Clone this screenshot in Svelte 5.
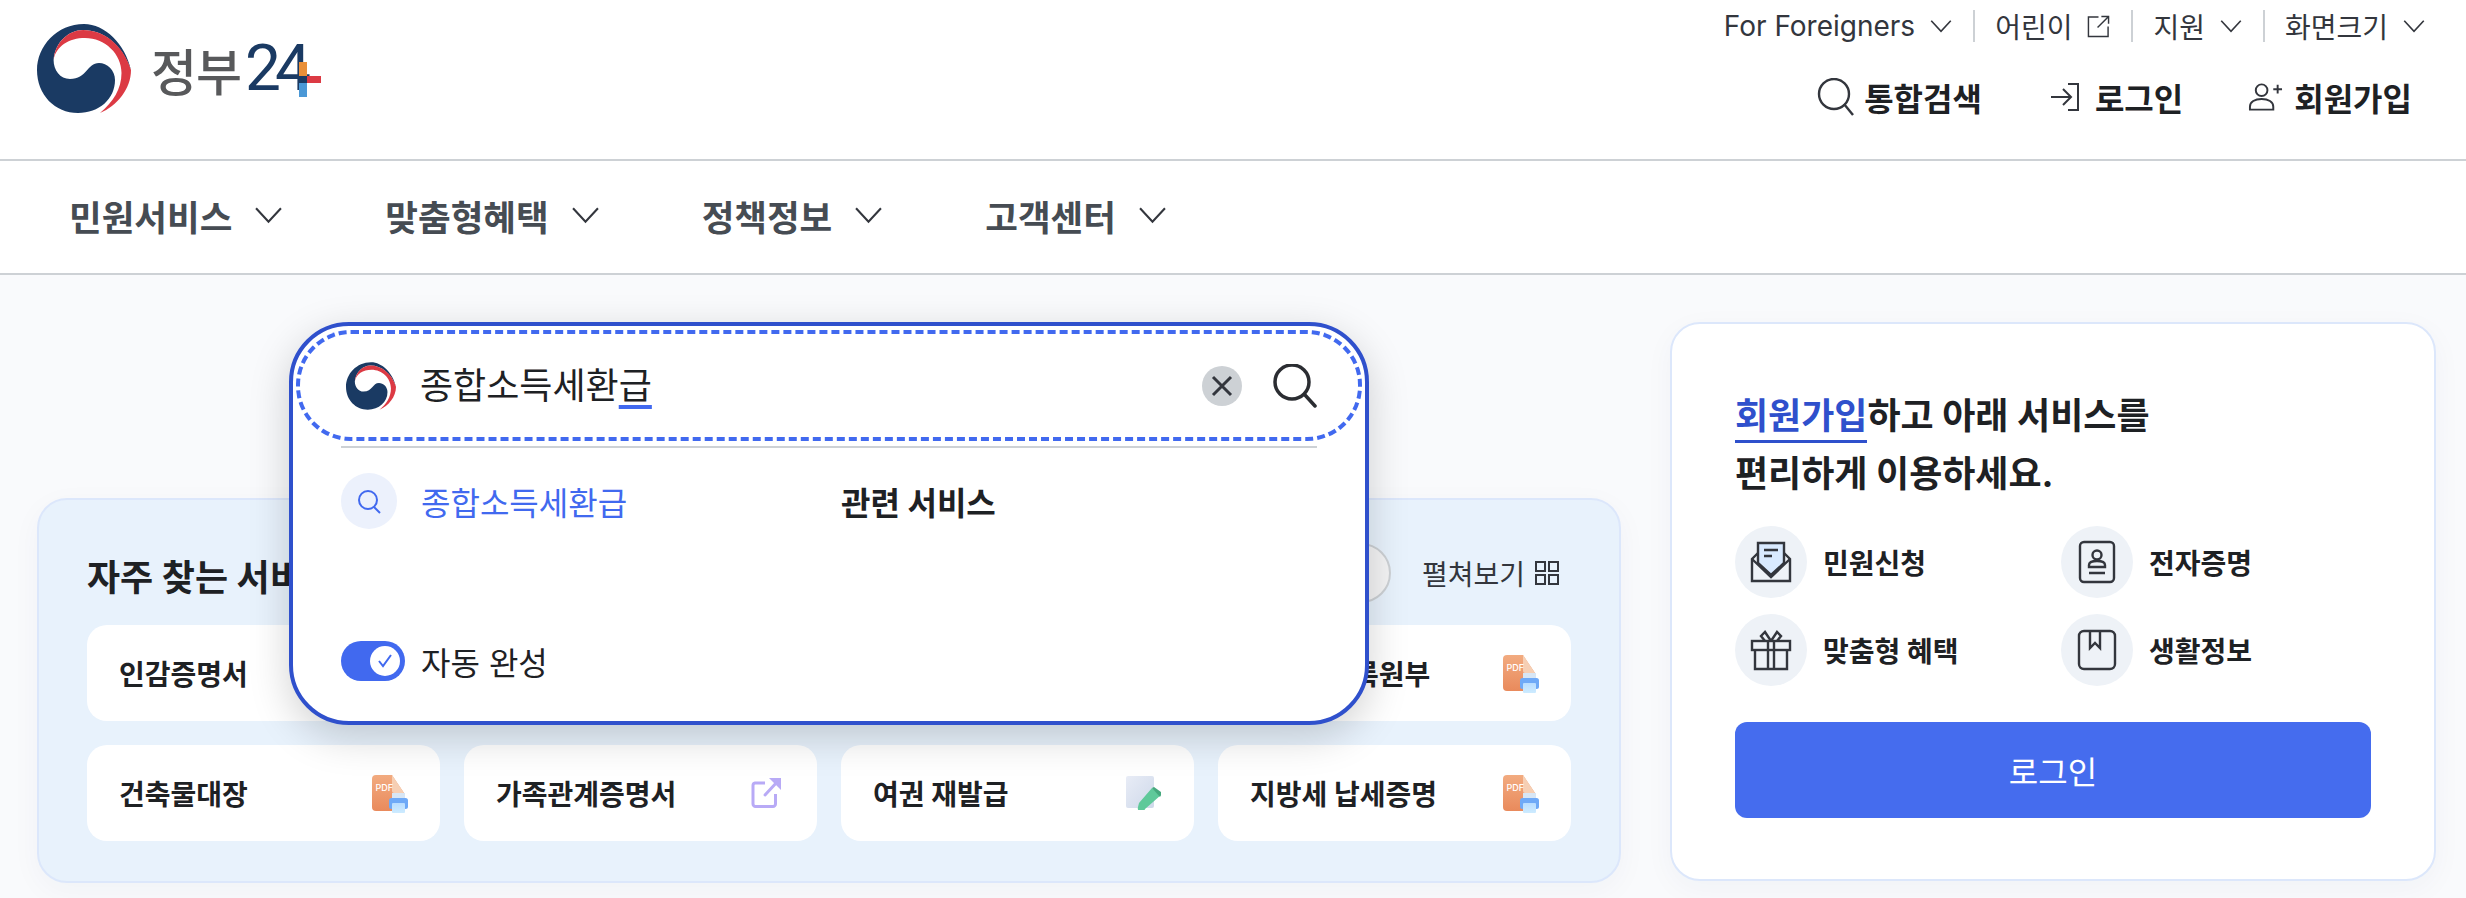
<script>
  const utilLinks = [
    { label: "For Foreigners", icon: "chevron" },
    { label: "어린이", icon: "external" },
    { label: "지원", icon: "chevron" },
    { label: "화면크기", icon: "chevron" }
  ];
  const menus = ["민원서비스", "맞춤형혜택", "정책정보", "고객센터"];
  const services = [
    { name: "인감증명서", icon: "pdf" },
    { name: "주민등록등본", icon: "pdf" },
    { name: "토지대장", icon: "pdf" },
    { name: "자동차등록원부", icon: "pdf" },
    { name: "건축물대장", icon: "pdf" },
    { name: "가족관계증명서", icon: "link" },
    { name: "여권 재발급", icon: "pen" },
    { name: "지방세 납세증명", icon: "pdf" }
  ];
</script>

{#snippet taegeuk(cls)}
  <svg class={cls} viewBox="0 0 94 89" aria-hidden="true">
    <path fill="#1a3a63" d="M47 0C20 0 0 22 0 46c0 25 18 43 41 43 21 0 37-14 37-33 0-10-8-17-16-17-12 0-12 16-29 16-10 0-16.400-9-16.400-19C18 18 32 6 46 6c20 0 39 14 48 40C88 20 68 0 47 0Z" />
    <path fill="#dc3a44" d="M16.600 36C18 18 32 6 46 6c20 0 40 14 48 40 0 19-14 36-31 43 13-11 21.500-24 21.500-40C84.500 30 68 14 48 14 32 14 19 22 16.600 36Z" />
  </svg>
{/snippet}

{#snippet chevron(cls)}
  <svg class={cls} viewBox="0 0 26 16" fill="none" stroke="currentColor" stroke-width="2" aria-hidden="true"><path d="M1 1l12 13L25 1" /></svg>
{/snippet}

{#snippet pdfIcon()}
  <svg class="card-icon pdf" width="36" height="38" viewBox="0 0 36 38" aria-hidden="true">
    <defs>
      <linearGradient id="pdf-page" x1="0" y1="0" x2="0" y2="1"><stop offset="0" stop-color="#f2ab80" /><stop offset="1" stop-color="#e98a5c" /></linearGradient>
      <linearGradient id="pdf-paper" x1="0" y1="0" x2="0" y2="1"><stop offset="0" stop-color="#b8dcff" /><stop offset="1" stop-color="#cdebff" /></linearGradient>
    </defs>
    <path fill="url(#pdf-page)" d="M4 0h16l12 18v18H4a4 4 0 0 1-4-4V4a4 4 0 0 1 4-4Z" />
    <path fill="#f6cfb4" d="M20 0l12 18H22a2 2 0 0 1-2-2Z" />
    <text x="3.500" y="16" class="pdf-text">PDF</text>
    <rect x="20" y="18" width="13" height="8" fill="#d7e6f5" />
    <rect x="17" y="23" width="19" height="11" rx="2.500" fill="#6ea9f7" />
    <rect x="20" y="28" width="13" height="10" rx="1" fill="url(#pdf-paper)" />
  </svg>
{/snippet}

{#snippet linkIcon()}
  <svg class="card-icon link" width="30" height="30" viewBox="0 0 30 30" fill="none" stroke="#b8aaf6" stroke-width="3" aria-hidden="true">
    <path d="M14 5H4a2.500 2.500 0 0 0-2 2.500V26a2.500 2.500 0 0 0 2.500 2.500H22a2.500 2.500 0 0 0 2.500-2.500V16" />
    <path stroke-linecap="round" d="M14 17L27 3" />
    <path fill="#b8aaf6" stroke="none" d="M18 0h12v12z" />
  </svg>
{/snippet}

{#snippet penIcon()}
  <svg class="card-icon pen" width="36" height="34" viewBox="0 0 36 34" aria-hidden="true">
    <defs>
      <linearGradient id="pen-page" x1="0" y1="0" x2="1" y2="1"><stop offset="0" stop-color="#e8ecf6" /><stop offset="1" stop-color="#cfd9ea" /></linearGradient>
    </defs>
    <rect width="28" height="32" rx="2" fill="url(#pen-page)" />
    <path fill="#5fc99a" d="M26 12l9 7-16 14a3 3 0 0 1-7-2l1-4Z" />
    <path fill="#45a87d" d="M26 12l2-1 7 5v3l-1 2Z" />
  </svg>
{/snippet}

<div class="page">
  <header class="top">
    <a class="logo" href="#home" aria-label="정부24">
      {@render taegeuk("logo-mark")}
      <span class="logo-name">정부</span>
      <span class="logo-num">24</span>
      <svg class="logo-plus" width="22" height="35" viewBox="0 0 22 35" aria-hidden="true">
        <rect width="8" height="14" fill="#e98f38" />
        <rect y="14" width="8" height="7" fill="#1a3a63" />
        <rect y="21" width="8" height="14" fill="#4b98d6" />
        <rect x="8" y="14" width="14" height="7" fill="#dc3a44" />
      </svg>
    </a>

    <div class="top-right">
      <ul class="util">
        {#each utilLinks as link}
          <li>
            <span>{link.label}</span>
            {#if link.icon === "chevron"}
              {@render chevron("util-chevron")}
            {:else}
              <svg class="util-ext" viewBox="0 0 24 24" fill="none" stroke="currentColor" stroke-width="1.500" aria-hidden="true"><path d="M12 2H1.500v20.500H22V12M11 13L22 2M15 1.500h7.500V9" /></svg>
            {/if}
          </li>
        {/each}
      </ul>
      <div class="account">
        <a class="acc-search" href="#search">
          <svg width="38" height="38" viewBox="0 0 38 38" fill="none" stroke="#33363d" stroke-width="2.400" aria-hidden="true"><ellipse cx="17" cy="16" rx="15" ry="15" /><path d="M27 26l9 11" /></svg>
          통합검색
        </a>
        <a class="acc-login" href="#login">
          <svg width="30" height="30" viewBox="0 0 30 30" fill="none" stroke="#33363d" stroke-width="2" aria-hidden="true"><path d="M18 2h10v26H18M1 15h19M13 7l8 8-8 8" /></svg>
          로그인
        </a>
        <a class="acc-join" href="#join">
          <svg width="35" height="30" viewBox="0 0 36 30" fill="none" stroke="#33363d" stroke-width="2" aria-hidden="true"><circle cx="14" cy="8" r="6" /><path d="M2 28v-3c0-5 5-8 12-8s12 3 12 8v3ZM26 7h9M30.500 2.500v9" /></svg>
          회원가입
        </a>
      </div>
    </div>
  </header>

  <nav class="gnb">
    {#each menus as menu}
      <a href="#menu">{menu} {@render chevron("gnb-chevron")}</a>
    {/each}
  </nav>

  <main class="content">
    <section class="favorites">
      <div class="fav-head">
        <h2>자주 찾는 서비스</h2>
        <div class="fav-tools">
          <span class="round-btn"></span>
          <span class="expand">
            펼쳐보기
            <svg width="24" height="24" viewBox="0 0 24 24" fill="none" stroke="#33363d" stroke-width="2" aria-hidden="true"><rect x="1" y="1" width="9" height="9" /><rect x="14" y="1" width="9" height="9" /><rect x="1" y="14" width="9" height="9" /><rect x="14" y="14" width="9" height="9" /></svg>
          </span>
        </div>
      </div>
      <div class="fav-grid">
        {#each services as item}
          <a class="fav-card" href="#service">
            <span>{item.name}</span>
            {#if item.icon === "pdf"}
              {@render pdfIcon()}
            {:else if item.icon === "link"}
              {@render linkIcon()}
            {:else}
              {@render penIcon()}
            {/if}
          </a>
        {/each}
      </div>
    </section>

    <aside class="join">
      <p class="join-title"><strong>회원가입</strong>하고 아래 서비스를<br />편리하게 이용하세요.</p>
      <ul class="join-list">
        <li>
          <span class="bubble">
            <svg width="42" height="42" viewBox="0 0 42 42" fill="none" stroke="#33363d" stroke-width="2.400" aria-hidden="true">
              <path fill="#d9eaff" d="M8 22V2h26v20l-13 12Z" />
              <path d="M14 9h14M14 15h8" />
              <path d="M8 12l-6 6v22h38V18l-6-6" />
              <path d="M2 18l19 18 19-18" />
            </svg>
          </span>
          민원신청
        </li>
        <li>
          <span class="bubble">
            <svg width="38" height="44" viewBox="0 0 38 44" fill="none" stroke="#33363d" stroke-width="2.400" aria-hidden="true">
              <rect x="2" y="2" width="34" height="40" rx="4" />
              <circle cx="19" cy="15" r="4.500" />
              <path d="M11 27v-2c0-3 4-4 8-4s8 1 8 4v2ZM11 33h16" />
            </svg>
          </span>
          전자증명
        </li>
        <li>
          <span class="bubble">
            <svg width="42" height="42" viewBox="0 0 42 42" fill="none" stroke="#33363d" stroke-width="2.400" aria-hidden="true">
              <rect x="2" y="12" width="38" height="9" />
              <path d="M5 21v19h32V21M18 12v28M24 12v28" />
              <path d="M21 12l-6-9-4 4 4 5M21 12l6-9 4 4-4 5" />
            </svg>
          </span>
          맞춤형 혜택
        </li>
        <li>
          <span class="bubble">
            <svg width="40" height="42" viewBox="0 0 40 42" fill="none" stroke="#33363d" stroke-width="2.400" aria-hidden="true">
              <rect x="2" y="2" width="36" height="38" rx="5" />
              <path d="M13 2v17l5-5 5 5V2" />
            </svg>
          </span>
          생활정보
        </li>
      </ul>
      <button class="login-btn" type="button">로그인</button>
    </aside>
  </main>

  <div class="search-pop">
    <div class="search-box">
      {@render taegeuk("search-mark")}
      <div class="search-value">종합소득세환<span class="composing">급</span></div>
      <span class="clear">
        <svg width="22" height="22" viewBox="0 0 22 22" fill="none" stroke="#33363d" stroke-width="3" aria-hidden="true"><path d="M2 2l18 18M20 2L2 20" /></svg>
      </span>
      <svg class="go" width="44" height="44" viewBox="0 0 44 44" fill="none" stroke="#2b2d32" stroke-width="3.500" aria-hidden="true"><circle cx="19" cy="18" r="17" /><path stroke-linecap="round" d="M32 31l10 11" /></svg>
    </div>
    <div class="search-rule"></div>
    <div class="suggest">
      <div class="suggest-row">
        <span class="suggest-dot">
          <svg width="24" height="25" viewBox="0 0 24 25" fill="none" stroke="#4169ef" stroke-width="2" aria-hidden="true"><circle cx="11" cy="11" r="9" /><path d="M17 18l6 6" /></svg>
        </span>
        <span class="suggest-text">종합소득세환급</span>
      </div>
      <strong class="related">관련 서비스</strong>
    </div>
    <label class="auto">
      <span class="toggle">
        <span class="knob">
          <svg width="16" height="16" viewBox="0 0 16 16" fill="none" stroke="#4169ef" stroke-width="2" aria-hidden="true"><path d="M2 8l4 5 8-11" /></svg>
        </span>
      </span>
      자동 완성
    </label>
  </div>
</div>

<style>
  :global(body) {
    margin: 0;
    background: #f9fafc;
  }

  .page {
    position: relative;
    width: 2466px;
    height: 898px;
    overflow: hidden;
    background: #f9fafc;
    color: #1e2124;
    font-family: Inter, "Noto Sans CJK KR", sans-serif;
  }

  a {
    color: inherit;
    text-decoration: none;
  }

  ul {
    margin: 0;
    padding: 0;
    list-style: none;
  }

  .top {
    display: flex;
    justify-content: space-between;
    height: 159px;
    padding: 0 55px 0 37px;
    background: #fff;
    border-bottom: 2px solid #cdd1d5;
  }

  .logo {
    position: relative;
    display: flex;
    align-items: center;
    align-self: flex-start;
    height: 89px;
    margin-top: 24px;
  }

  .logo-mark {
    width: 94px;
    height: 89px;
    margin-right: 20px;
  }

  .logo-name {
    font-size: 50px;
    font-weight: 500;
    color: #58595b;
    letter-spacing: -1px;
  }

  .logo-num {
    margin-left: 4px;
    font-family: Roboto, sans-serif;
    font-size: 64px;
    font-weight: 400;
    letter-spacing: -6px;
    color: #1a3a63;
  }

  .logo-plus {
    position: absolute;
    left: 262px;
    top: 38px;
  }

  .top-right {
    display: flex;
    flex-direction: column;
    align-items: flex-end;
  }

  .util {
    display: flex;
    align-items: center;
    height: 32px;
    margin: 10px -14px 0 0;
    font-size: 28px;
    color: #33363d;
  }

  .util li {
    display: flex;
    align-items: center;
    gap: 15px;
    padding: 0 0 0 20px;
    margin-left: 21px;
    height: 32px;
    border-left: 2px solid #cdd1d5;
  }

  .util li:first-child {
    border-left: 0;
  }

  .util-chevron {
    width: 22px;
    height: 13px;
  }

  .util-ext {
    width: 23px;
    height: 23px;
  }

  .account {
    display: flex;
    gap: 68px;
    margin: 32px -1px 0 0;
    font-size: 32px;
    font-weight: 700;
    color: #1e2124;
  }

  .account a {
    display: flex;
    align-items: center;
  }

  .acc-search {
    gap: 9px;
  }

  .acc-login {
    gap: 15px;
  }

  .acc-join {
    gap: 11px;
    margin-left: -3px;
  }

  .gnb {
    display: flex;
    align-items: center;
    gap: 103px;
    box-sizing: border-box;
    height: 114px;
    padding: 0 0 3px 69px;
    background: #fff;
    border-bottom: 2px solid #cdd1d5;
    font-size: 35.500px;
    font-weight: 700;
    color: #464c53;
  }

  .gnb a {
    display: flex;
    align-items: center;
    gap: 23px;
  }

  .gnb-chevron {
    width: 27px;
    height: 17px;
    color: #33363d;
  }

  .content {
    display: flex;
    align-items: flex-start;
    padding-left: 37px;
    gap: 49px;
  }

  .favorites {
    box-sizing: border-box;
    width: 1584px;
    height: 385px;
    margin-top: 223px;
    padding: 0 48px;
    background: #e8f2fc;
    border: 2px solid #dce7fb;
    border-radius: 30px;
    box-shadow: 0 8px 30px rgba(30, 50, 90, 0.04);
  }

  .fav-head {
    display: flex;
    justify-content: space-between;
    align-items: center;
    height: 125px;
    padding-top: 20px;
    box-sizing: border-box;
  }

  h2 {
    margin: 4px 0 0;
    font-size: 36px;
    font-weight: 700;
  }

  .fav-tools {
    display: flex;
    align-items: center;
    gap: 31px;
    margin-right: 12px;
  }

  .round-btn {
    box-sizing: border-box;
    width: 60px;
    height: 60px;
    border-radius: 50%;
    background: #f4f4f5;
    border: 2px solid #cdd1d5;
  }

  .expand {
    display: flex;
    align-items: center;
    gap: 10px;
    font-size: 28px;
    color: #33363d;
  }

  .fav-grid {
    display: grid;
    grid-template-columns: repeat(4, 353px);
    gap: 24px;
  }

  .fav-card {
    display: flex;
    align-items: center;
    justify-content: space-between;
    box-sizing: border-box;
    height: 96px;
    padding: 0 31px 0 32px;
    background: #fff;
    border-radius: 20px;
    font-size: 28px;
    font-weight: 700;
  }

  .pdf-text {
    font-family: Inter, sans-serif;
    font-size: 9px;
    font-weight: 500;
    fill: #fff;
  }

  .card-icon.pdf {
    margin: 2px 1px 0 0;
  }

  .card-icon.link {
    margin-right: 5px;
  }

  .card-icon.pen {
    margin-right: 1px;
  }

  .join {
    box-sizing: border-box;
    width: 766px;
    height: 559px;
    margin-top: 47px;
    padding: 63px 63px 0;
    background: #fff;
    border: 2px solid #dce7fb;
    border-radius: 30px;
    box-shadow: 0 8px 30px rgba(30, 50, 90, 0.04);
  }

  .join-title {
    margin: 0;
    font-size: 36px;
    font-weight: 700;
    line-height: 58px;
  }

  .join-title strong {
    color: #2f50cc;
    font-weight: 700;
    border-bottom: 3px solid #2f50cc;
    padding-bottom: 2px;
  }

  .join-list {
    display: grid;
    grid-template-columns: 326px 1fr;
    gap: 16px 0;
    margin-top: 23px;
    font-size: 28px;
    font-weight: 700;
  }

  .join-list li {
    display: flex;
    align-items: center;
    gap: 16px;
  }

  .bubble {
    display: flex;
    align-items: center;
    justify-content: center;
    width: 72px;
    height: 72px;
    border-radius: 50%;
    background: #eef2f7;
  }

  .login-btn {
    display: block;
    width: 636px;
    height: 96px;
    margin-top: 36px;
    border: 0;
    border-radius: 12px;
    background: #456cee;
    color: #fff;
    font-family: inherit;
    font-size: 32px;
    font-weight: 400;
  }

  .search-pop {
    position: absolute;
    left: 289px;
    top: 322px;
    box-sizing: border-box;
    width: 1080px;
    height: 403px;
    padding: 4px 3px 0;
    background: #fff;
    border: 4px solid #2f50cc;
    border-radius: 60px;
    box-shadow: 0 12px 40px rgba(0, 0, 0, 0.18);
  }

  .search-box {
    display: flex;
    align-items: center;
    box-sizing: border-box;
    height: 111px;
    padding: 0 41px 0 46px;
    border: 4px dashed #4169ef;
    border-radius: 55px;
  }

  .search-mark {
    width: 50px;
    height: 50px;
  }

  .search-value {
    flex: 1;
    margin: 0 0 6px 24px;
    font-size: 36px;
  }

  .composing {
    text-decoration: underline 4px #4169ef;
    text-underline-offset: 6px;
    text-decoration-skip-ink: none;
  }

  .clear {
    display: flex;
    align-items: center;
    justify-content: center;
    width: 40px;
    height: 40px;
    border-radius: 50%;
    background: #cdd1d5;
  }

  .go {
    margin-left: 31px;
  }

  .search-rule {
    height: 2px;
    margin: 5px 45px 0 45px;
    background: #cdd1d5;
  }

  .suggest {
    display: flex;
    align-items: center;
    margin: 25px 0 0 45px;
  }

  .suggest-row {
    display: flex;
    align-items: center;
    gap: 24px;
    width: 500px;
  }

  .suggest-dot {
    display: flex;
    align-items: center;
    justify-content: center;
    width: 56px;
    height: 56px;
    border-radius: 50%;
    background: #ecf1fc;
  }

  .suggest-text {
    font-size: 32px;
    color: #4169ef;
  }

  .related {
    font-size: 32px;
    font-weight: 700;
  }

  .auto {
    position: absolute;
    left: 48px;
    bottom: 37px;
    display: flex;
    align-items: center;
    gap: 16px;
    font-size: 32px;
  }

  .toggle {
    display: flex;
    align-items: center;
    justify-content: flex-end;
    box-sizing: border-box;
    width: 64px;
    height: 40px;
    padding-right: 5px;
    border-radius: 20px;
    background: #4169ef;
  }

  .knob {
    display: flex;
    align-items: center;
    justify-content: center;
    width: 30px;
    height: 30px;
    border-radius: 50%;
    background: #fff;
  }
</style>
